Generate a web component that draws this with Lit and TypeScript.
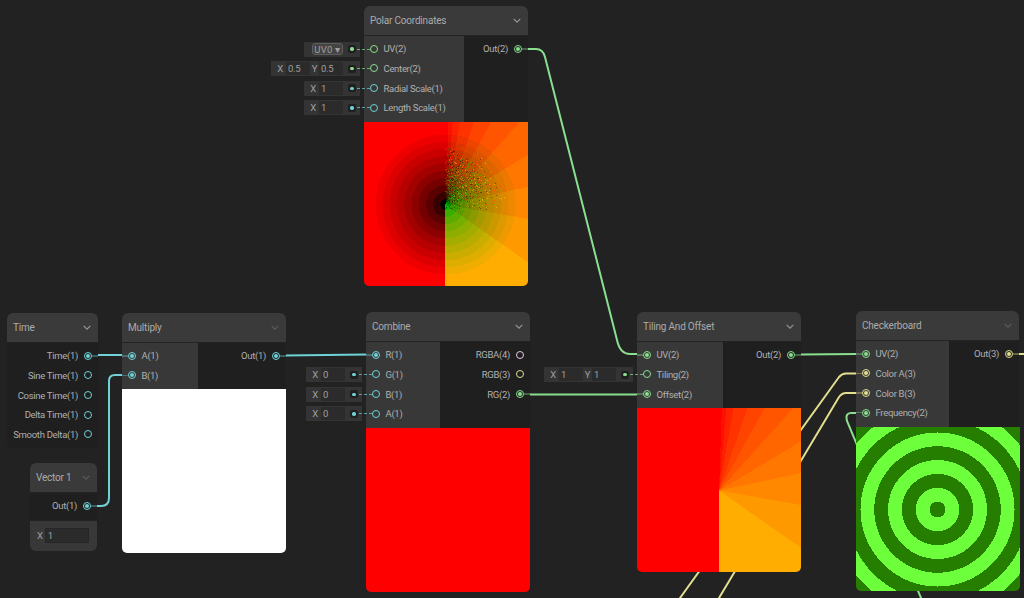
import { LitElement, css, html, nothing, svg } from 'lit'
import { customElement, property } from 'lit/decorators.js'

const CYAN = '#6fd2d6'
const GREEN = '#8adf8e'
const YELLOW = '#e2df8e'
const PINK = '#e6c8e2'

type Field = { label?: string; value: string }
type Inline = { fields: Field[]; dropdown?: boolean }
type Slot = { name: string; color: string; on?: boolean; inline?: Inline }
type Node = {
  x: number
  y: number
  w: number
  title: string
  dimChevron?: boolean
  colW?: number
  inputs: Slot[]
  outputs: Slot[]
  preview?: string
  vector?: boolean
}

const one = (value: string): Inline => ({ fields: [{ label: 'X', value }] })
const two = (a: string, b: string): Inline => ({
  fields: [{ label: 'X', value: a }, { label: 'Y', value: b }],
})

const NODES: Node[] = [
  {
    x: 364, y: 6, w: 164, title: 'Polar Coordinates', colW: 100, preview: 'polar',
    inputs: [
      { name: 'UV(2)', color: GREEN, inline: { fields: [{ value: 'UV0' }], dropdown: true } },
      { name: 'Center(2)', color: GREEN, inline: two('0.5', '0.5') },
      { name: 'Radial Scale(1)', color: CYAN, inline: one('1') },
      { name: 'Length Scale(1)', color: CYAN, inline: one('1') },
    ],
    outputs: [{ name: 'Out(2)', color: GREEN, on: true }],
  },
  {
    x: 7, y: 313, w: 91, title: 'Time', inputs: [],
    outputs: [
      { name: 'Time(1)', color: CYAN, on: true },
      { name: 'Sine Time(1)', color: CYAN },
      { name: 'Cosine Time(1)', color: CYAN },
      { name: 'Delta Time(1)', color: CYAN },
      { name: 'Smooth Delta(1)', color: CYAN },
    ],
  },
  {
    x: 30, y: 463, w: 67, title: 'Vector 1', dimChevron: true, inputs: [], vector: true,
    outputs: [{ name: 'Out(1)', color: CYAN, on: true }],
  },
  {
    x: 122, y: 313, w: 164, title: 'Multiply', dimChevron: true, colW: 76, preview: 'white',
    inputs: [
      { name: 'A(1)', color: CYAN, on: true },
      { name: 'B(1)', color: CYAN, on: true },
    ],
    outputs: [{ name: 'Out(1)', color: CYAN, on: true }],
  },
  {
    x: 366, y: 312, w: 164, title: 'Combine', colW: 74, preview: 'red',
    inputs: [
      { name: 'R(1)', color: CYAN, on: true },
      { name: 'G(1)', color: CYAN, inline: one('0') },
      { name: 'B(1)', color: CYAN, inline: one('0') },
      { name: 'A(1)', color: CYAN, inline: one('0') },
    ],
    outputs: [
      { name: 'RGBA(4)', color: PINK },
      { name: 'RGB(3)', color: YELLOW },
      { name: 'RG(2)', color: GREEN, on: true },
    ],
  },
  {
    x: 637, y: 312, w: 164, title: 'Tiling And Offset', colW: 86, preview: 'tiling',
    inputs: [
      { name: 'UV(2)', color: GREEN, on: true },
      { name: 'Tiling(2)', color: GREEN, inline: two('1', '1') },
      { name: 'Offset(2)', color: GREEN, on: true },
    ],
    outputs: [{ name: 'Out(2)', color: GREEN, on: true }],
  },
  {
    x: 856, y: 311, w: 163, title: 'Checkerboard', dimChevron: true, colW: 93, preview: 'rings',
    inputs: [
      { name: 'UV(2)', color: GREEN, on: true },
      { name: 'Color A(3)', color: YELLOW, on: true },
      { name: 'Color B(3)', color: YELLOW, on: true },
      { name: 'Frequency(2)', color: GREEN, on: true },
    ],
    outputs: [{ name: 'Out(3)', color: YELLOW, on: true }],
  },
]

const EDGES: [string, string][] = [
  ['M97 355H123', CYAN],
  ['M123 375H115Q109 375 109 381V498Q109 506 101 506H96', CYAN],
  ['M285 355.5L367 354.5', CYAN],
  ['M527 49H536Q543 49 545 57L617 340Q620 354 630 354H638', GREEN],
  ['M529 394.5H638', GREEN],
  ['M800 354.5L857 354', GREEN],
  ['M857 373.5H846Q842 373.5 839 377L680 598', YELLOW],
  ['M857 393H846Q842 393 839 397L719 598', YELLOW],
  ['M857 413H851Q845 413 847 421L921 598', GREEN],
  ['M1018 354H1024', YELLOW],
]

// angle measured from straight down, same fan on both polar previews
const SECTORS = [55, 80, 102, 121, 138, 151, 161, 170, 175, 178]
const LEVELS = [173, 153, 136, 119, 102, 85, 68, 51, 34, 17, 0]

function sector(dx: number, dy: number) {
  if (dx < 0) return 0
  const a = (Math.atan2(dx, dy) * 180) / Math.PI
  const i = SECTORS.findIndex((s) => a < s)
  return LEVELS[i < 0 ? LEVELS.length - 1 : i]
}

function paint(kind: string, data: Uint8ClampedArray) {
  let seed = 7
  const rnd = () => (seed = (seed * 16807) % 2147483647) / 2147483647
  for (let y = 0; y < 164; y++) {
    for (let x = 0; x < 164; x++) {
      const i = (y * 164 + x) * 4
      let c = [255, 0, 0]
      if (kind === 'rings') {
        const r = Math.hypot(x - 81, y - 82)
        c = Math.floor((r + 5.8) / 13.8) % 2 === 0 ? [37, 126, 0] : [110, 255, 60]
      } else if (kind === 'tiling') {
        c = [255, sector(x - 81.5, y - 82), 0]
      } else {
        const dx = x - 81
        const dy = y - 82
        const r = Math.hypot(dx, dy)
        let red = Math.pow(Math.min(1, Math.floor((r + 2) / 7.2) / 10), 0.65) * 255
        let g = sector(dx, dy)
        if (dx >= 0 && dy < 6 && r < 62) {
          // the dithered patch above the centre
          const up = Math.max(0, -dy / (r + 1))
          if (rnd() < (1 - r / 62) * (0.3 + up * 0.6)) {
            red = rnd() < 0.5 ? red * 0.6 : Math.min(255, red * 1.25)
            g = rnd() < 0.5 ? g * 0.6 : Math.min(173, g + 50)
          }
        }
        c = [red, g, 0]
      }
      data[i] = c[0]
      data[i + 1] = c[1]
      data[i + 2] = c[2]
      data[i + 3] = 255
    }
  }
}

@customElement('shader-preview')
export class ShaderPreview extends LitElement {
  static styles = css`
    :host {
      display: block;
      width: 164px;
      height: 164px;
      border-radius: 0 0 5px 5px;
      overflow: hidden;
    }
    canvas { display: block; width: 164px; height: 164px; }
    .white { background: #ffffff; height: 100%; }
    .red { background: #ff0000; height: 100%; }
  `

  @property() kind = 'white'

  firstUpdated() {
    const canvas = this.renderRoot.querySelector('canvas')
    if (!canvas) return
    const ctx = canvas.getContext('2d')!
    const img = ctx.createImageData(164, 164)
    paint(this.kind, img.data)
    ctx.putImageData(img, 0, 0)
  }

  render() {
    if (this.kind === 'white' || this.kind === 'red') return html`<div class=${this.kind}></div>`
    return html`<canvas width="164" height="164"></canvas>`
  }
}

@customElement('graph-node')
export class GraphNode extends LitElement {
  static styles = css`
    :host {
      display: block;
      position: absolute;
      font-family: Roboto, 'Liberation Sans', sans-serif;
      font-size: 9.5px;
      letter-spacing: -0.3px;
      color: #b0b0b0;
    }
    .node { background: #1f1f1f; border-radius: 6px; }
    .head {
      height: 28px;
      display: flex;
      align-items: center;
      justify-content: space-between;
      padding: 0 7px 1px 6px;
      background: #3a3a3a;
      border-radius: 6px 6px 0 0;
      border-bottom: 1px solid #232323;
      font-size: 10px;
      letter-spacing: -0.2px;
      color: #ababab;
    }
    .chevron { width: 8px; height: 5px; stroke: #969696; fill: none; stroke-width: 1.2; }
    .chevron.dim { stroke: #5c5c5c; }
    .slots { display: flex; justify-content: space-between; }
    .col { padding: 3px 0 4px; box-sizing: border-box; }
    .col.in { background: #383838; }
    .col.out { flex: 1; }
    .row { height: 19.67px; display: flex; align-items: center; position: relative; white-space: nowrap; }
    .col.in .row { padding-left: 5.5px; gap: 6px; }
    .col.out .row { justify-content: flex-end; padding-right: 6px; gap: 6px; }
    .port {
      width: 8px;
      height: 8px;
      box-sizing: border-box;
      flex: none;
      border-radius: 50%;
      border: 1.4px solid var(--c);
      position: relative;
      display: flex;
      align-items: center;
      justify-content: center;
    }
    .port.on::before {
      content: '';
      width: 4px;
      height: 4px;
      border-radius: 50%;
      background: var(--c);
    }
    .stub { position: absolute; height: 1.5px; background: var(--c); opacity: 0.35; top: 9px; }
    .col.in .stub { left: 0; width: 6px; }
    .col.out .stub { right: 0; width: 6px; }
    .inline {
      position: absolute;
      right: calc(100% + 4px);
      top: 2.5px;
      height: 15px;
      box-sizing: border-box;
      display: flex;
      align-items: center;
      justify-content: flex-end;
      background: #343434;
      padding-right: 4px;
      color: #a0a0a0;
      font-size: 9.5px;
    }
    .inline .lab { width: 12px; text-align: center; flex: none; }
    .inline .field {
      width: 24px;
      height: 13px;
      line-height: 13px;
      background: #2b2b2b;
      color: #a0a0a0;
      padding-left: 2px;
      box-sizing: border-box;
    }
    .drop {
      width: 31px;
      height: 12px;
      line-height: 11px;
      box-sizing: border-box;
      border: 1px solid #5e5e5e;
      border-radius: 3px;
      background: #444444;
      text-align: center;
      font-size: 9.5px;
      letter-spacing: 0.3px;
    }
    .dot {
      width: 8px;
      height: 8px;
      margin-left: 5px;
      border-radius: 2px;
      background: #1f1f1f;
      display: flex;
      align-items: center;
      justify-content: center;
      position: relative;
    }
    .dot::before { content: ''; width: 3.5px; height: 3.5px; border-radius: 50%; background: var(--c); }
    .dot::after {
      content: '';
      position: absolute;
      left: 9px;
      top: 3.5px;
      width: 13px;
      border-top: 1.5px dashed var(--c);
      opacity: 0.7;
    }
    .vector {
      height: 31px;
      background: #383838;
      border-top: 1px solid #232323;
      box-sizing: border-box;
      display: flex;
      align-items: center;
      padding: 0 8px 0 7px;
      gap: 2px;
      border-radius: 0 0 6px 6px;
      color: #a0a0a0;
    }
    .vector .field {
      flex: 1;
      height: 13px;
      line-height: 13px;
      background: #2b2b2b;
      border: 1px solid #262626;
      padding-left: 2px;
    }
  `

  @property({ attribute: false }) node!: Node

  inlineBox(inline: Inline) {
    const wide = inline.fields.length === 2
    return html`<div class="inline" style="width:${wide ? 89 : 56}px">
      ${inline.dropdown
        ? html`<div class="drop">UV0 ▾</div>`
        : inline.fields.map(
            (f, i) => html`<span class="lab" style=${i === 1 ? 'width:9px' : ''}>${f.label}</span>
              <div class="field">${f.value}</div>`,
          )}
      <div class="dot"></div>
    </div>`
  }

  render() {
    const n = this.node
    return html`<div class="node">
      <div class="head">
        <span>${n.title}</span>
        <svg class="chevron ${n.dimChevron ? 'dim' : ''}" viewBox="0 0 8 5"><path d="M.7.8 4 4.1 7.3.8" /></svg>
      </div>
      <div class="slots">
        ${n.inputs.length
          ? html`<div class="col in" style="width:${n.colW}px">
              ${n.inputs.map(
                (s) => html`<div class="row" style="--c:${s.color}">
                  ${s.on ? html`<div class="stub"></div>` : nothing}
                  ${s.inline ? this.inlineBox(s.inline) : nothing}
                  <div class="port ${s.on ? 'on' : ''}"></div>
                  <span>${s.name}</span>
                </div>`,
              )}
            </div>`
          : nothing}
        <div class="col out">
          ${n.outputs.map(
            (s) => html`<div class="row" style="--c:${s.color}">
              ${s.on ? html`<div class="stub"></div>` : nothing}
              <span>${s.name}</span>
              <div class="port ${s.on ? 'on' : ''}"></div>
            </div>`,
          )}
        </div>
      </div>
      ${n.preview ? html`<shader-preview .kind=${n.preview}></shader-preview>` : nothing}
      ${n.vector
        ? html`<div class="vector"><span>X</span><div class="field">1</div></div>`
        : nothing}
    </div>`
  }
}

@customElement('app-root')
export class AppRoot extends LitElement {
  static styles = css`
    :host {
      display: block;
      position: relative;
      width: 1024px;
      height: 598px;
      overflow: hidden;
      background: #222222;
    }
    .edges { position: absolute; left: 0; top: 0; width: 1024px; height: 598px; }
    .edges path { fill: none; stroke-width: 2; stroke-linecap: round; }
  `

  render() {
    return html`
      <svg class="edges" viewBox="0 0 1024 598">
        ${EDGES.map(([d, c]) => svg`<path d=${d} stroke=${c}></path>`)}
      </svg>
      ${NODES.map(
        (n) => html`<graph-node
          .node=${n}
          style="left:${n.x}px;top:${n.y}px;width:${n.w}px"
        ></graph-node>`,
      )}
    `
  }
}
